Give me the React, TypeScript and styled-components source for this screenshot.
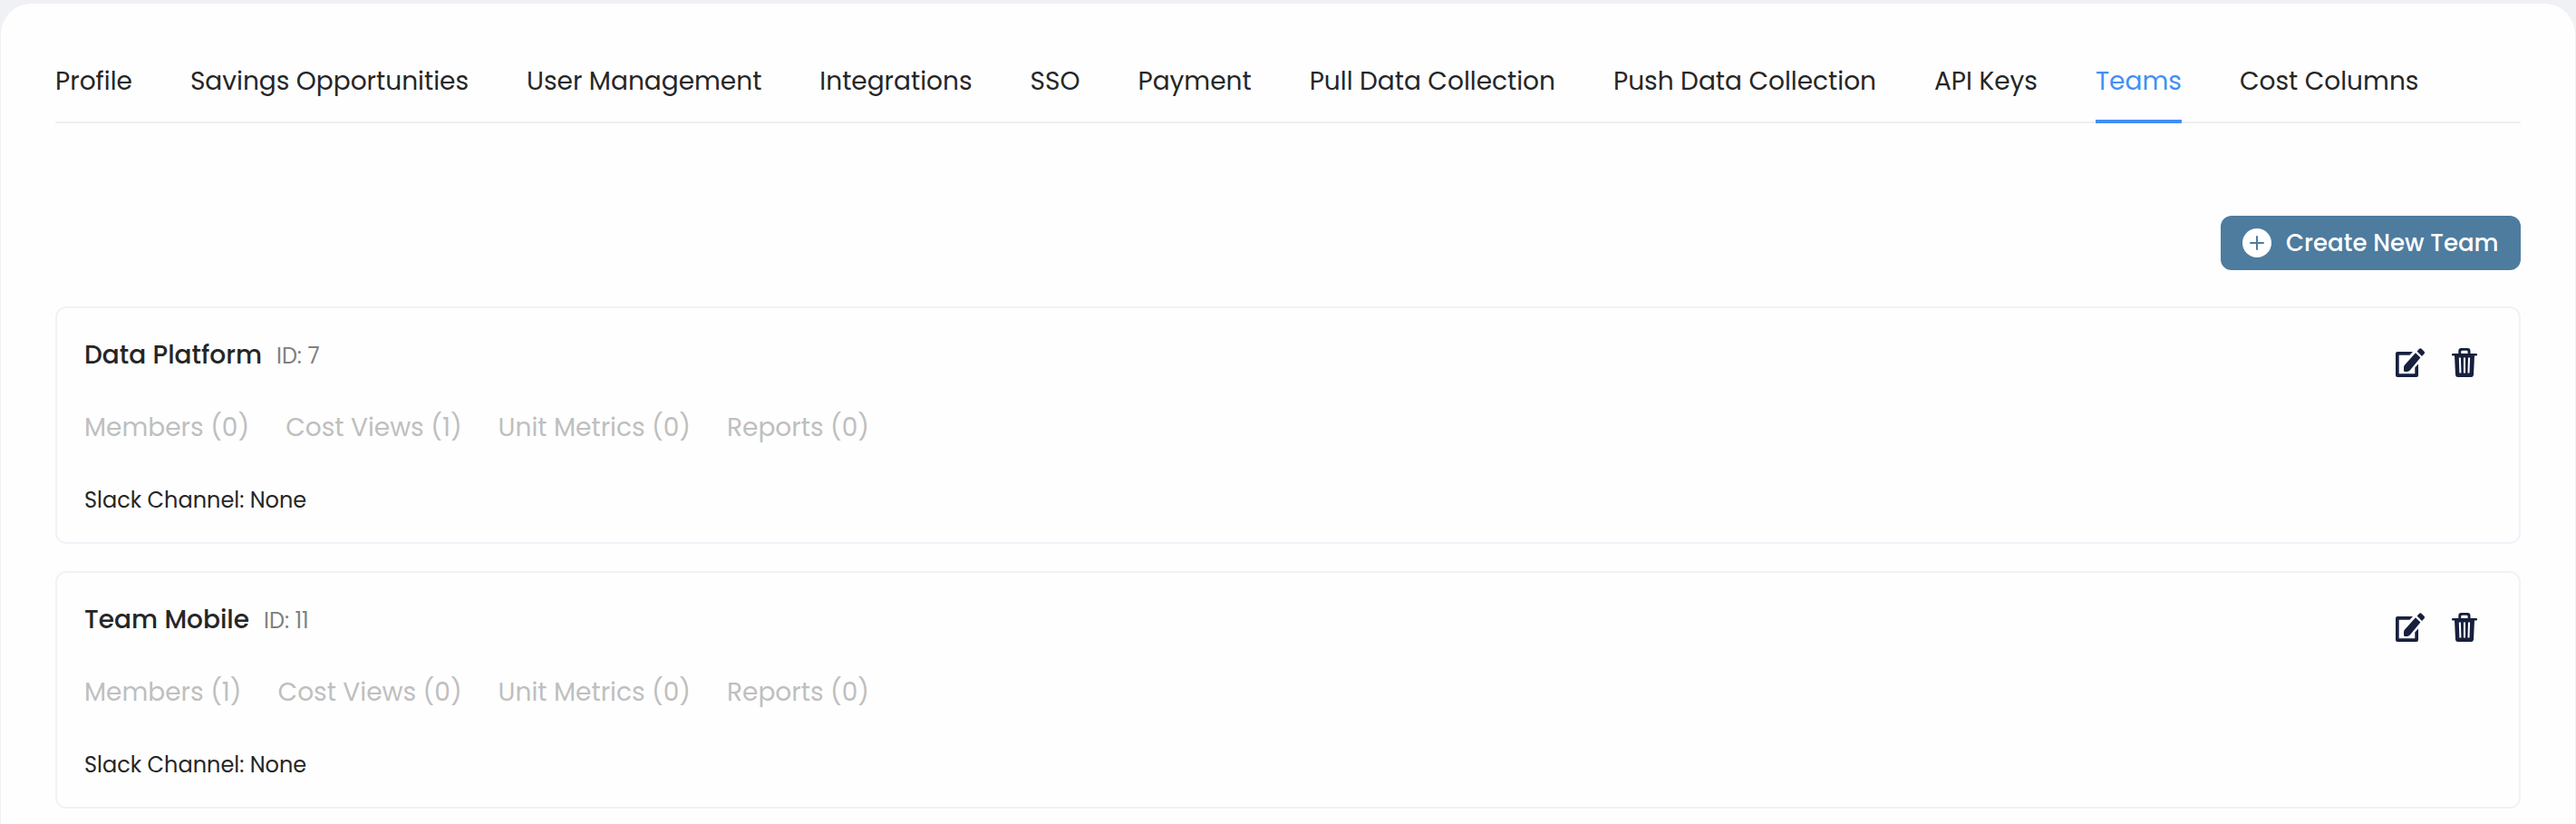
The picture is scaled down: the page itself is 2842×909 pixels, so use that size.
import React from "react";
import styled, { createGlobalStyle } from "styled-components";

const GlobalStyle = createGlobalStyle`
  * { box-sizing: border-box; }
  body {
    margin: 0;
    background: #eff1f5;
    color: #262626;
    font-family: Poppins, Inter, sans-serif;
    overflow: hidden;
  }
`;

const Page = styled.div`
  height: 909px;
  padding: 4px 1px 0;
  overflow: hidden;
`;

const Panel = styled.main`
  height: 960px;
  padding: 64px 60px 0;
  border-radius: 34px 34px 0 0;
  background: #fefefe;
`;

const TabBar = styled.nav`
  display: flex;
  gap: 64px;
  height: 68px;
  box-shadow: inset 0 -2px #f0f0f0;
`;

const Label = styled.span`
  flex: none;
  font-size: 28px;
  line-height: 44px;
  white-space: nowrap;
`;

const Tab = styled(Label)<{ $active: boolean }>`
  height: 68px;
  color: ${(p) => (p.$active ? "#448ef7" : "inherit")};
  border-bottom: 4px solid ${(p) => (p.$active ? "#448ef7" : "transparent")};
`;

const Toolbar = styled.div`
  display: flex;
  justify-content: flex-end;
  padding: 102px 0 40px;
`;

const CreateButton = styled.button`
  display: flex;
  align-items: center;
  gap: 16px;
  width: 331px;
  height: 60px;
  padding: 0 24px;
  border: 0;
  border-radius: 12px;
  background: #4d7c9f;
  color: #fff;
  font: 500 26px/40px Poppins, Inter, sans-serif;
  white-space: nowrap;

  svg { flex: none; }
`;

const TeamList = styled.div`
  display: flex;
  flex-direction: column;
  gap: 30px;
`;

const TeamCard = styled.section`
  display: flex;
  justify-content: space-between;
  height: 262px;
  padding: 30px 46px 0 30px;
  border: 2px solid #eff3f8;
  border-radius: 12px;
`;

const TeamInfo = styled.div`
  display: flex;
  flex-direction: column;
`;

const Heading = styled.div`
  display: flex;
  align-items: baseline;
  gap: 16px;
  height: 44px;
`;

const TeamName = styled(Label)`
  font-weight: 500;
`;

const TeamId = styled(Label)`
  font-size: 24px;
  line-height: 38px;
  color: #808080;
`;

const Stats = styled.div`
  display: flex;
  gap: 40px;
  margin: 36px 0 39px;
  color: #bfbfbf;
`;

const Slack = styled.div`
  font-size: 24px;
  line-height: 38px;
`;

const Actions = styled.div`
  display: flex;
  gap: 30px;
  padding-top: 14px;
  color: #17203d;
`;

const PlusIcon = () => (
  <svg width="32" height="32" viewBox="0 0 32 32">
    <circle cx="16" cy="16" r="16" fill="#fff" />
    <path d="M16 9v14M9 16h14" stroke="#4d7c9f" strokeWidth="2" strokeLinecap="round" />
  </svg>
);

const EditIcon = () => (
  <svg width="32" height="32" viewBox="0 0 32 32" fill="currentColor">
    <path d="M2 4H19L15.5 7.8H3.7V28.2H21.3V21.5L25 17.5V30a2 2 0 0 1-2 2H2a2 2 0 0 1-2-2V6a2 2 0 0 1 2-2Z" />
    <path d="M22 5.2 27.4 10.4 15.8 24.6Q14.6 26 12.8 26H10.5Q9 26 9 24.5V21.4Q9 19.7 10.1 18.5Z" />
    <path d="M23.6 3.6 25.9 1Q27.2-.4 28.7.9L31.3 3.5Q32.6 4.9 31.5 6.3L29 9Z" />
  </svg>
);

const TrashIcon = () => (
  <svg width="28" height="32" viewBox="0 0 28 32" fill="currentColor">
    <path
      fillRule="evenodd"
      d="M7.3 6V3.2Q7.3 0 10.5 0H17.3Q20.5 0 20.5 3.2V6H27A1 1 0 0 1 27 8.4H25L24 29.5Q23.8 32 21.3 32H6.7Q4.2 32 4 29.5L3 8.4H1A1 1 0 0 1 1 6ZM10.2 6H17.6V4Q17.6 2.7 16.3 2.7H11.5Q10.2 2.7 10.2 4ZM7.8 10.5 8.4 27.5H10.4L9.9 10.5ZM12.9 10.5V27.5H15V10.5ZM18 10.5 17.5 27.5H19.5L20.1 10.5Z"
    />
  </svg>
);

const tabs = [
  "Profile",
  "Savings Opportunities",
  "User Management",
  "Integrations",
  "SSO",
  "Payment",
  "Pull Data Collection",
  "Push Data Collection",
  "API Keys",
  "Teams",
  "Cost Columns",
];

const teams = [
  { name: "Data Platform", id: 7, members: 0, costViews: 1, unitMetrics: 0, reports: 0 },
  { name: "Team Mobile", id: 11, members: 1, costViews: 0, unitMetrics: 0, reports: 0 },
];

export default function App() {
  return (
    <Page>
      <GlobalStyle />
      <Panel>
        <TabBar>
          {tabs.map((t) => (
            <Tab key={t} $active={t === "Teams"}>{t}</Tab>
          ))}
        </TabBar>
        <Toolbar>
          <CreateButton>
            <PlusIcon />
            Create New Team
          </CreateButton>
        </Toolbar>
        <TeamList>
          {teams.map((team) => (
            <TeamCard key={team.id}>
              <TeamInfo>
                <Heading>
                  <TeamName>{team.name}</TeamName>
                  <TeamId>{`ID: ${team.id}`}</TeamId>
                </Heading>
                <Stats>
                  <Label>{`Members (${team.members})`}</Label>
                  <Label>{`Cost Views (${team.costViews})`}</Label>
                  <Label>{`Unit Metrics (${team.unitMetrics})`}</Label>
                  <Label>{`Reports (${team.reports})`}</Label>
                </Stats>
                <Slack>Slack Channel: None</Slack>
              </TeamInfo>
              <Actions>
                <EditIcon />
                <TrashIcon />
              </Actions>
            </TeamCard>
          ))}
        </TeamList>
      </Panel>
    </Page>
  );
}
